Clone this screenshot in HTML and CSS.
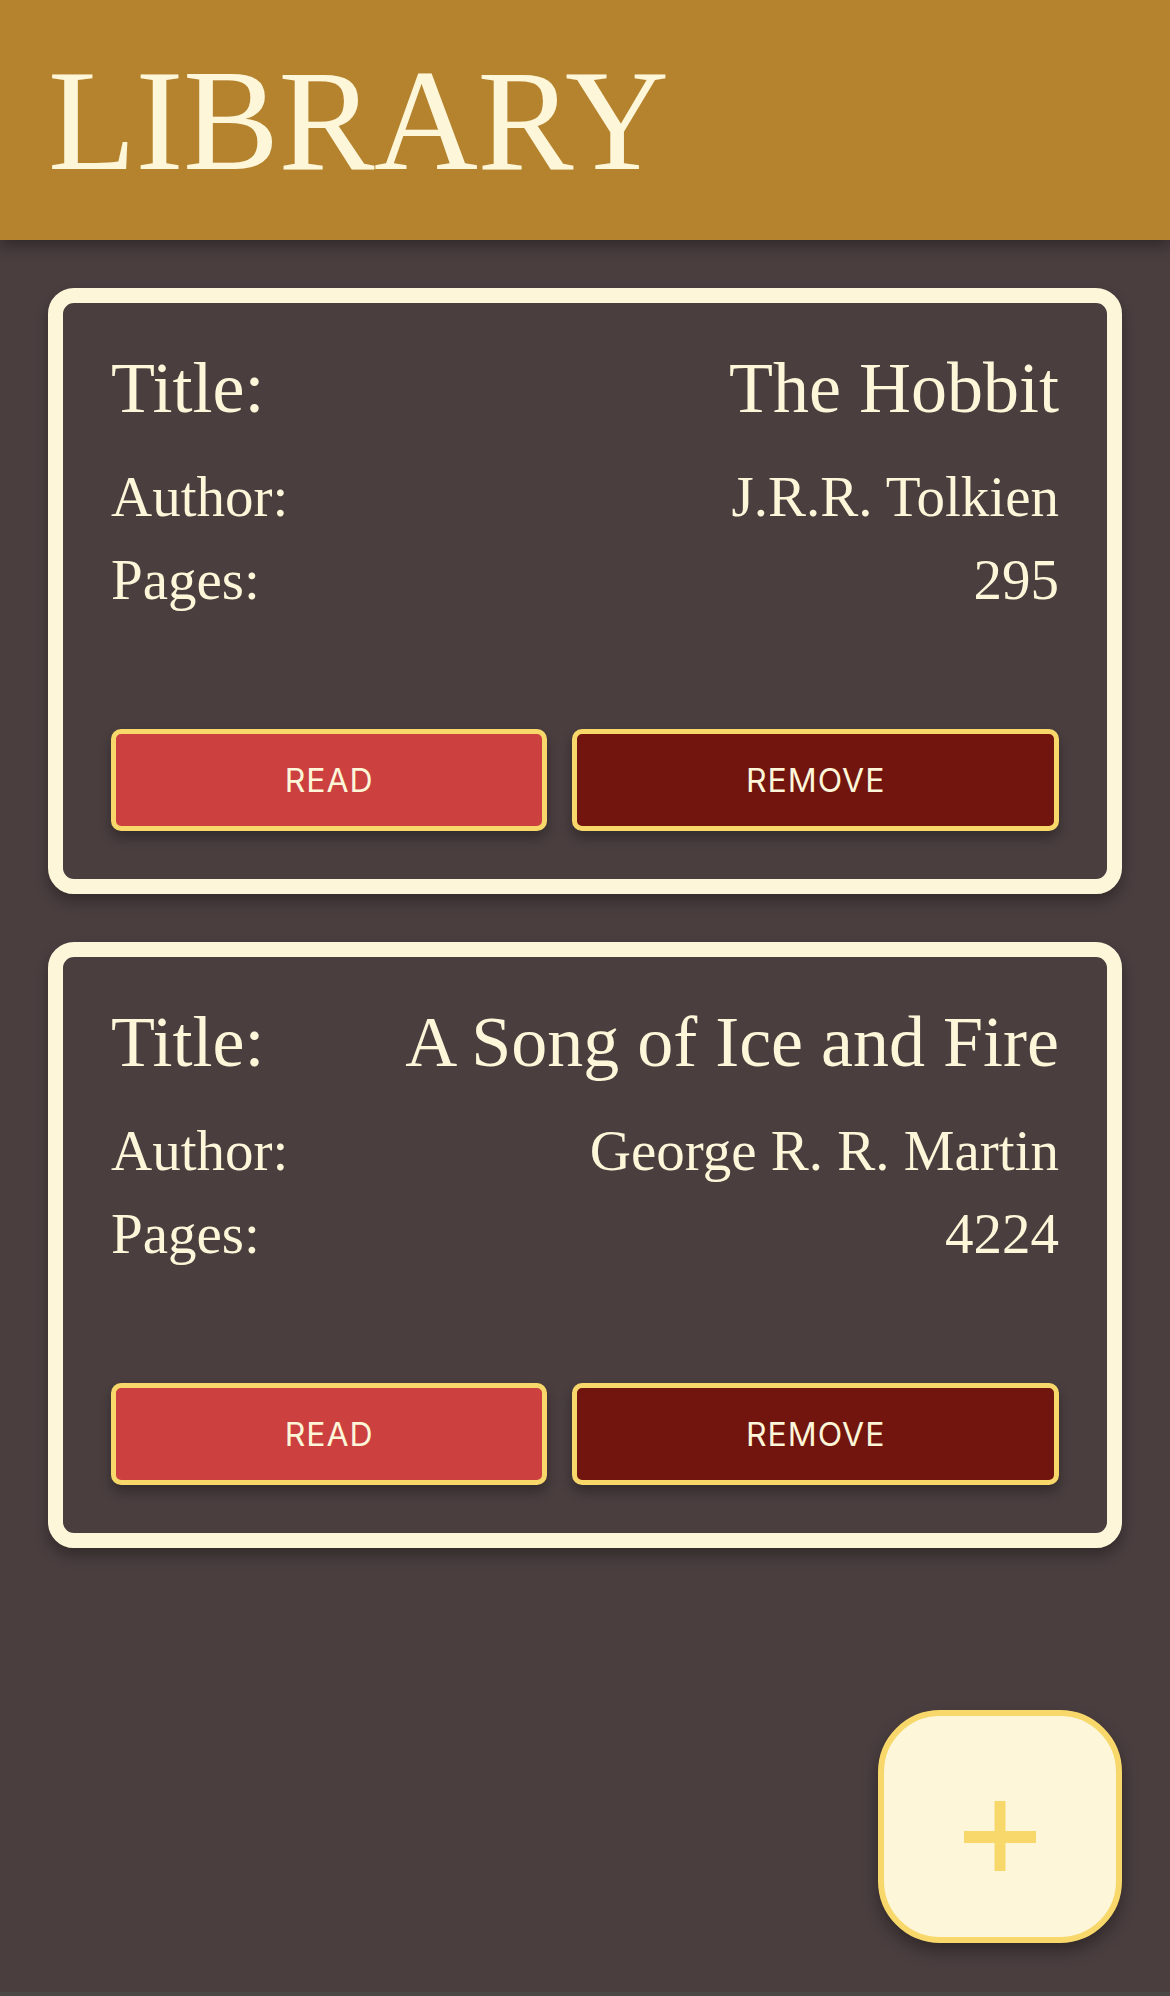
FILE: index.html
```html
<!DOCTYPE html>
<html lang="en">
<head>
<meta charset="utf-8">
<title>Library</title>
<link rel="stylesheet" href="styles.css">
</head>
<body>
<header class="app-header">
  <h1 class="app-title">LIBRARY</h1>
</header>
<main class="library">
  <article class="book-card">
    <div class="book-info">
      <div class="info-row title-row"><span class="label">Title:</span><span class="value">The Hobbit</span></div>
      <div class="info-row meta-row first-meta"><span class="label">Author:</span><span class="value">J.R.R. Tolkien</span></div>
      <div class="info-row meta-row"><span class="label">Pages:</span><span class="value">295</span></div>
    </div>
    <div class="book-actions">
      <button class="btn btn-read">READ</button>
      <button class="btn btn-remove">REMOVE</button>
    </div>
  </article>
  <article class="book-card">
    <div class="book-info">
      <div class="info-row title-row"><span class="label">Title:</span><span class="value">A Song of Ice and Fire</span></div>
      <div class="info-row meta-row first-meta"><span class="label">Author:</span><span class="value">George R. R. Martin</span></div>
      <div class="info-row meta-row"><span class="label">Pages:</span><span class="value">4224</span></div>
    </div>
    <div class="book-actions">
      <button class="btn btn-read">READ</button>
      <button class="btn btn-remove">REMOVE</button>
    </div>
  </article>
</main>
<button class="fab" aria-label="Add book">
  <svg class="fab-icon" width="72" height="72" viewBox="0 0 72 72">
    <rect x="0" y="30" width="72" height="12" fill="#F8D86A"/>
    <rect x="30.5" y="0" width="11" height="70" fill="#F8D86A"/>
  </svg>
</button>
</body>
</html>
```
FILE: styles.css
```css
html {
  background: #4b4747;
}
body {
  margin: 0;
  min-height: 1992px;
  background: #4a3e3f;
  font-family: "Liberation Serif", "Times New Roman", serif;
  color: #fdf6d9;
}
.app-header {
  position: relative;
  z-index: 1;
  height: 240px;
  background: #b5822d;
  display: flex;
  align-items: center;
  padding-left: 48px;
  box-shadow: 0 6px 14px rgba(0, 0, 0, 0.35);
}
.app-title {
  margin: 0;
  font-size: 144px;
  font-weight: normal;
  letter-spacing: -0.5px;
  line-height: normal;
  color: #fdf6d9;
}
.library {
  padding: 48px 48px 0;
  display: flex;
  flex-direction: column;
  gap: 48px;
}
.book-card {
  border: 15px solid #fdf6d9;
  border-radius: 26px;
  padding: 48px;
  box-shadow: 0 8px 14px rgba(0, 0, 0, 0.3);
}
.info-row {
  display: flex;
  justify-content: space-between;
  align-items: baseline;
}
.title-row {
  font-size: 72px;
  line-height: 74px;
}
.meta-row {
  font-size: 57px;
  line-height: 83px;
}
.first-meta {
  margin-top: 30px;
}
.value {
  text-align: right;
}
.book-actions {
  margin-top: 108px;
  display: flex;
  gap: 25px;
}
.btn {
  flex: 1 1 auto;
  height: 102px;
  padding: 0;
  border: 5px solid #f8d86a;
  border-radius: 10px;
  font-family: Inter, "Noto Sans", sans-serif;
  font-size: 32px;
  letter-spacing: 1px;
  color: #fdf6d9;
  box-shadow: 0 7px 12px rgba(0, 0, 0, 0.3);
}
.btn-read {
  background: #cc4140;
}
.btn-remove {
  background: #72150f;
}
.fab {
  position: fixed;
  right: 48px;
  bottom: 53px;
  width: 244px;
  height: 233px;
  padding: 0;
  border: 6px solid #f8d86a;
  border-radius: 62px;
  background: #fdf6d9;
  display: flex;
  align-items: center;
  justify-content: center;
  box-shadow: 0 8px 16px rgba(0, 0, 0, 0.35);
}
.fab-icon {
  display: block;
  margin-top: 20px;
}
```
